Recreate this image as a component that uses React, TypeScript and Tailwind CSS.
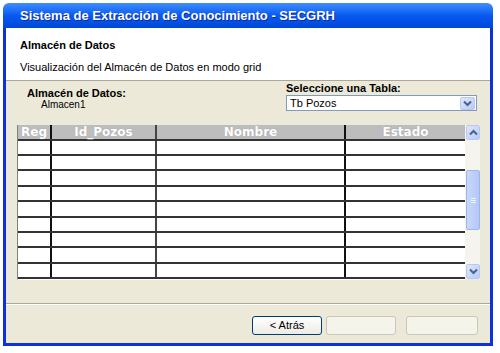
const rowHeights = [15, 15, 16, 15, 16, 15, 15, 16, 15];

const Chevron = ({ up = false }: { up?: boolean }) => (
  <svg width="9" height="7" viewBox="0 0 9 7" className={up ? "" : "rotate-180"}>
    <path d="M1 5.5 L4.5 2 L8 5.5" fill="none" stroke="#4d6185" strokeWidth="2" />
  </svg>
);

const ScrollButton = ({ up = false }: { up?: boolean }) => (
  <div className="h-[15px] w-[14px] ml-[1px] flex items-center justify-center rounded-[2px] border border-[#b9c9f3] bg-gradient-to-br from-[#dde7fe] to-[#b6cbf8]">
    <Chevron up={up} />
  </div>
);

const App = () => {
  return (
    <div className="w-[500px] h-[353px] bg-white pl-[3px] pt-[3px] font-['Liberation_Sans',Arial,sans-serif] text-black">
      <div className="w-[490px] h-[343px] flex flex-col">
        {/* Title bar */}
        <div className="h-[25px] shrink-0 rounded-t-[6px] bg-gradient-to-b from-[#3d8dff] via-[#0859f2] to-[#0048d6] flex items-center pl-[17px] text-white text-[13px] font-bold [text-shadow:1px_1px_0_#0a2a9c]">
          Sistema de Extracción de Conocimiento - SECGRH
        </div>

        <div className="flex-1 flex flex-col border-x-[3px] border-b-[3px] border-[#0a32dc]">
          {/* Header */}
          <div className="h-[53px] shrink-0 bg-white border-b border-[#aca899] pl-[14px] pt-[11px] text-[11px]">
            <div className="font-bold leading-[13px]">Almacén de Datos</div>
            <div className="leading-[13px] mt-[9px]">Visualización del Almacén de Datos en modo grid</div>
          </div>

          {/* Body */}
          <div className="flex-1 bg-[#ece9d8] flex flex-col">
            <div className="h-[44px] shrink-0 flex">
              <div className="ml-[21px] mt-[6px] text-[11px]">
                <div className="font-bold leading-[13px]">Almacén de Datos:</div>
                <div className="ml-[14px] text-[10px] leading-[11px] -mt-[1px]">Almacen1</div>
              </div>
              <div className="ml-auto mr-[13px] mt-[1px] w-[191px] text-[11px]">
                <div className="font-bold leading-[13px]">Seleccione una Tabla:</div>
                <div className="h-[16px] bg-white border border-[#7f9db9] flex items-center justify-between pl-[3px] pr-[1px]">
                  <span className="leading-[13px]">Tb Pozos</span>
                  <div className="h-[13px] w-[15px] flex items-center justify-center rounded-[2px] border border-[#b9c9f3] bg-gradient-to-br from-[#dde7fe] to-[#b6cbf8]">
                    <Chevron />
                  </div>
                </div>
              </div>
            </div>

            {/* Grid */}
            <div className="ml-[11px] w-[463px] flex">
              <div className="w-[448px] border-l border-b border-l-[#808080] border-b-white bg-white">
                <div className="h-[16px] flex bg-[#bdbdbd] border-b-2 border-[#333] text-white font-bold text-[12px] font-['DejaVu_Sans',Verdana,sans-serif] leading-[14px] [text-shadow:0_0_1px_#9a9a9a]">
                  <div className="w-[34px] border-r-2 border-[#111] text-center">Reg</div>
                  <div className="w-[105px] border-r-2 border-[#444] text-center">Id_Pozos</div>
                  <div className="w-[189px] border-r-2 border-[#111] text-center">Nombre</div>
                  <div className="flex-1 text-center">Estado</div>
                </div>
                {rowHeights.map((h, i) => (
                  <div key={i} className={`${h === 16 ? "h-[16px]" : "h-[15px]"} flex border-b-2 border-[#333]`}>
                    <div className="w-[34px] border-r-2 border-[#111]" />
                    <div className="w-[105px] border-r-2 border-[#444]" />
                    <div className="w-[189px] border-r-2 border-[#111]" />
                    <div className="flex-1" />
                  </div>
                ))}
              </div>

              {/* Scrollbar */}
              <div className="w-[15px] h-[154px] bg-[#f5f4ee] flex flex-col">
                <ScrollButton up />
                <div className="h-[30px]" />
                <div className="h-[60px] w-[14px] ml-[1px] rounded-[2px] border border-[#9eb4ea] bg-gradient-to-r from-[#c9d8fc] to-[#b3c8f7] flex items-center justify-center">
                  <div className="w-[5px] flex flex-col gap-[1px]">
                    <div className="h-px bg-[#eef3ff]" />
                    <div className="h-px bg-[#eef3ff]" />
                    <div className="h-px bg-[#eef3ff]" />
                  </div>
                </div>
                <div className="flex-1" />
                <ScrollButton />
              </div>
            </div>
            <div className="flex-1" />
          </div>

          {/* Separator */}
          <div className="h-px bg-[#aca899]" />
          <div className="h-px bg-white" />

          {/* Footer */}
          <div className="h-[38px] shrink-0 bg-[#ece9d8] flex justify-end items-start pt-[11px] pr-[12px] text-[11px]">
            <button className="w-[70px] h-[19px] rounded-[3px] border border-[#003c74] bg-gradient-to-b from-white to-[#ecebe6] leading-[15px]">
              &lt; Atrás
            </button>
            <button className="ml-[4px] w-[70px] h-[19px] rounded-[3px] border border-[#c9c7ba] bg-[#f5f4ea]" />
            <button className="ml-[10px] w-[72px] h-[19px] rounded-[3px] border border-[#c9c7ba] bg-[#f5f4ea]" />
          </div>
        </div>
      </div>
    </div>
  );
};

export default App;
